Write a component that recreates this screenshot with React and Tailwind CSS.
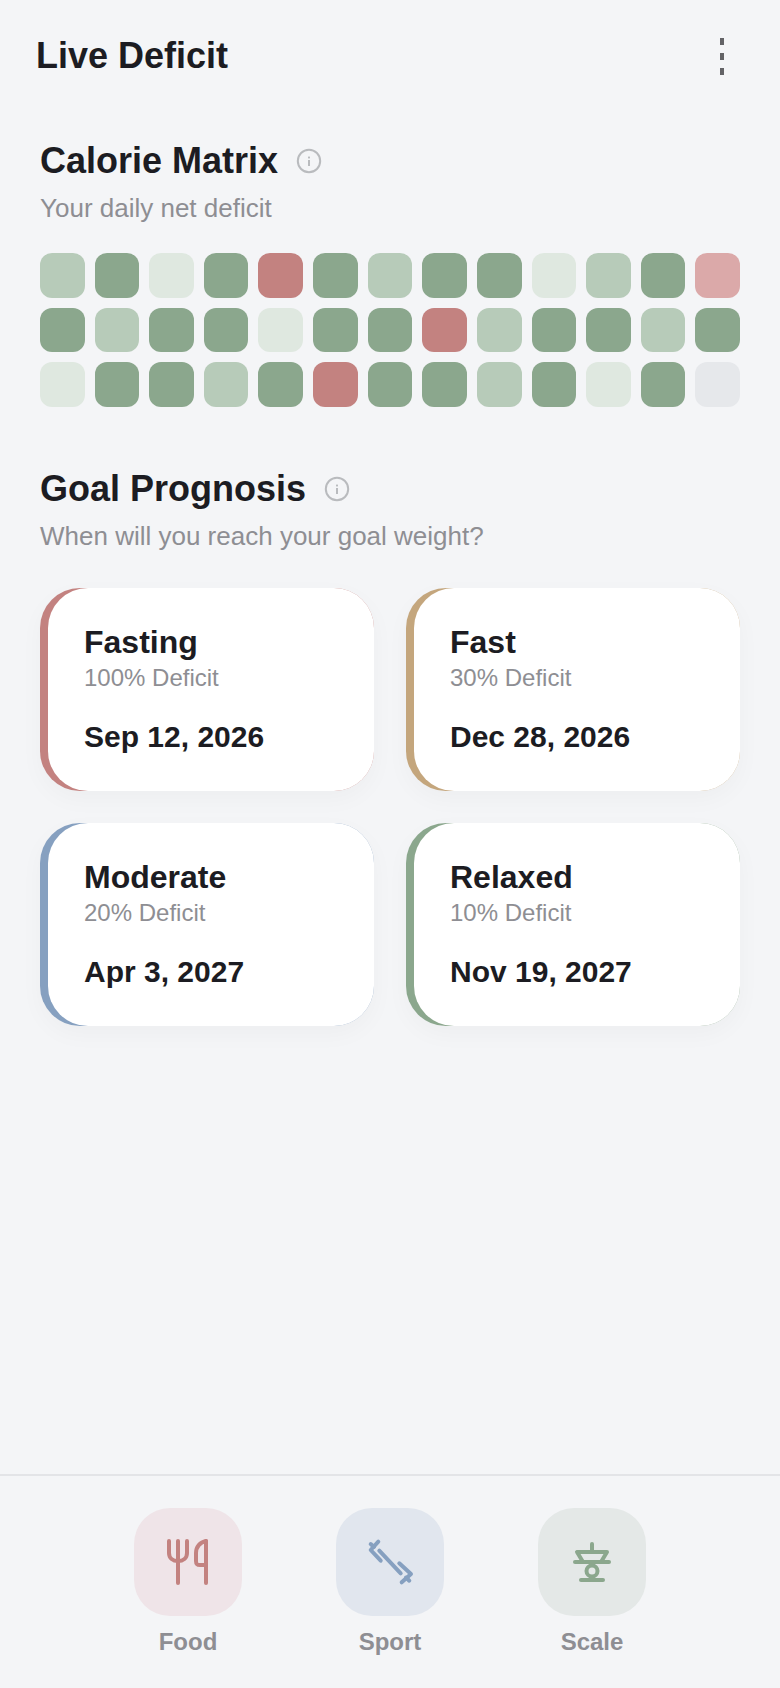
import React from 'react';

const font = { fontFamily: '"Liberation Sans", Arial, sans-serif' };

const DARK = 'bg-[#8ba78d]';
const MID = 'bg-[#b7cbb9]';
const LIGHT = 'bg-[#dfe8e0]';
const RED = 'bg-[#c38280]';
const PINK = 'bg-[#dba9a9]';
const EMPTY = 'bg-[#e6e8eb]';

const cells = [
  MID, DARK, LIGHT, DARK, RED, DARK, MID, DARK, DARK, LIGHT, MID, DARK, PINK,
  DARK, MID, DARK, DARK, LIGHT, DARK, DARK, RED, MID, DARK, DARK, MID, DARK,
  LIGHT, DARK, DARK, MID, DARK, RED, DARK, DARK, MID, DARK, LIGHT, DARK, EMPTY,
];

const plans = [
  { name: 'Fasting', pct: '100% Deficit', date: 'Sep 12, 2026', color: 'bg-[#c38280]' },
  { name: 'Fast', pct: '30% Deficit', date: 'Dec 28, 2026', color: 'bg-[#c4a67d]' },
  { name: 'Moderate', pct: '20% Deficit', date: 'Apr 3, 2027', color: 'bg-[#86a0c0]' },
  { name: 'Relaxed', pct: '10% Deficit', date: 'Nov 19, 2027', color: 'bg-[#8ba78d]' },
];

function InfoIcon() {
  return (
    <svg width="26" height="26" viewBox="0 0 26 26" fill="none" className="shrink-0">
      <circle cx="13" cy="13" r="11.2" stroke="#b9bbbe" strokeWidth="2" />
      <rect x="12" y="12" width="2" height="6" fill="#b9bbbe" />
      <rect x="12" y="8.6" width="2" height="1.8" fill="#b9bbbe" />
    </svg>
  );
}

function SectionTitle({ title, subtitle }) {
  return (
    <div>
      <div className="flex items-center gap-[18px]">
        <h2 className="text-[36px] leading-[44px] font-bold text-[#1c1c22]">{title}</h2>
        <InfoIcon />
      </div>
      <p className="mt-2 text-[26px] leading-[34px] text-[#8e8e93]">{subtitle}</p>
    </div>
  );
}

function PlanCard({ plan }) {
  return (
    <div className={`h-[203px] rounded-[40px] pl-2 shadow-[0_8px_24px_rgba(0,0,0,0.03)] ${plan.color}`}>
      <div className="h-full rounded-[40px] bg-white pl-9 pt-[34px]">
        <div className="text-[32px] leading-[41px] font-bold text-[#1c1c22]">{plan.name}</div>
        <div className="text-[24px] leading-[30px] text-[#8e8e93]">{plan.pct}</div>
        <div className="mt-[25px] text-[30px] leading-[38px] font-bold text-[#1c1c22]">{plan.date}</div>
      </div>
    </div>
  );
}

function FoodIcon() {
  return (
    <svg width="48" height="48" viewBox="0 0 48 48" fill="none" stroke="#c38280" strokeWidth="4" strokeLinecap="round">
      <path d="M5 3V15C5 20 9 23 14 23C19 23 23 20 23 15V3" />
      <path d="M14 3V45" />
      <path d="M42 3V45" />
      <path d="M42 3C36 4 32 9 32 15V23C32 26 33 27 36 27H42" />
    </svg>
  );
}

function SportIcon() {
  return (
    <svg width="48" height="48" viewBox="0 0 48 48" fill="none" stroke="#86a0c0" strokeWidth="4" strokeLinecap="round" strokeLinejoin="round">
      <path d="M13.3 12.7L34.7 35.3" />
      <path d="M14.7 22.7L4.7 12L12.3 3.7" />
      <path d="M4.7 6L8 9" />
      <path d="M33.3 25.3L45 36L35.7 44.3" />
      <path d="M43.3 42.7L40 39.5" />
    </svg>
  );
}

function ScaleIcon() {
  return (
    <svg width="48" height="48" viewBox="0 0 48 48" fill="none" stroke="#8ba78d" strokeWidth="4" strokeLinecap="round" strokeLinejoin="round">
      <path d="M24 6V14" />
      <path d="M15 24L9 14H39L33 24" />
      <path d="M7 24H41" />
      <circle cx="24" cy="33" r="5.5" />
      <path d="M13 42H35" />
    </svg>
  );
}

function NavItem({ label, bg, children }) {
  return (
    <div className="flex flex-col items-center">
      <div className={`flex h-[108px] w-[108px] items-center justify-center rounded-[36px] ${bg}`}>{children}</div>
      <span className="mt-[9px] text-[24px] leading-[34px] font-bold text-[#8e8e93]">{label}</span>
    </div>
  );
}

export default function App() {
  return (
    <div className="flex h-[1688px] w-[780px] flex-col bg-[#f4f5f7]" style={font}>
      <header className="flex items-center justify-between pl-9 pr-[56px] pt-[33px]">
        <h1 className="text-[36px] leading-[46px] font-bold text-[#1c1c22]">Live Deficit</h1>
        <div className="flex flex-col gap-2">
          <span className="h-[7px] w-1 bg-[#636366]" />
          <span className="h-[7px] w-1 bg-[#636366]" />
          <span className="h-[7px] w-1 bg-[#636366]" />
        </div>
      </header>

      <main className="flex-1 px-10">
        <section className="mt-[60px]">
          <SectionTitle title="Calorie Matrix" subtitle="Your daily net deficit" />
          <div className="mt-7 grid grid-cols-[repeat(13,minmax(0,1fr))] gap-[10px]">
            {cells.map((c, i) => (
              <div key={i} className={`aspect-square rounded-[12px] ${c}`} />
            ))}
          </div>
        </section>

        <section className="mt-[60px]">
          <SectionTitle title="Goal Prognosis" subtitle="When will you reach your goal weight?" />
          <div className="mt-[35px] grid grid-cols-2 gap-8">
            {plans.map(p => (
              <PlanCard key={p.name} plan={p} />
            ))}
          </div>
        </section>
      </main>

      <nav className="flex h-[214px] justify-center gap-[94px] border-t-2 border-[#e3e4e7] pt-8">
        <NavItem label="Food" bg="bg-[#efe4e8]"><FoodIcon /></NavItem>
        <NavItem label="Sport" bg="bg-[#e1e6ee]"><SportIcon /></NavItem>
        <NavItem label="Scale" bg="bg-[#e4e8e7]"><ScaleIcon /></NavItem>
      </nav>
    </div>
  );
}
